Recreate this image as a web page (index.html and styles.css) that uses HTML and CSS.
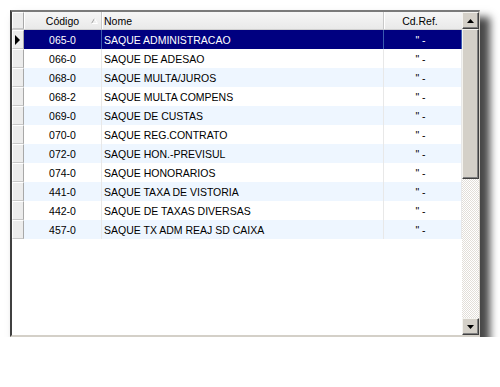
FILE: index.html
```html
<!DOCTYPE html>
<html>
<head>
<meta charset="utf-8">
<link rel="stylesheet" href="styles.css">
</head>
<body>
<div class="frame">
  <div class="grid">
    <div class="row head">
      <div class="ind"></div>
      <div class="c code">Código<svg class="sort" width="7" height="6" viewBox="0 0 7 6"><path d="M0.5 5.5 L3.5 0.5" stroke="#a0a0a0" fill="none"/><path d="M3.5 0.5 L6.5 5.5 M0.5 5.5 H6.5" stroke="#ffffff" fill="none"/></svg></div>
      <div class="c name">Nome</div>
      <div class="c ref">Cd.Ref.</div>
    </div>
    <div class="row sel">
      <div class="ind"><svg width="6" height="10" viewBox="0 0 6 10"><path d="M0 0 L5 5 L0 10 Z" fill="#000"/></svg></div>
      <div class="c code">065-0</div><div class="c name">SAQUE ADMINISTRACAO</div><div class="c ref">" -</div>
    </div>
    <div class="row">
      <div class="ind"></div>
      <div class="c code">066-0</div><div class="c name">SAQUE DE ADESAO</div><div class="c ref">" -</div>
    </div>
    <div class="row alt">
      <div class="ind"></div>
      <div class="c code">068-0</div><div class="c name">SAQUE MULTA/JUROS</div><div class="c ref">" -</div>
    </div>
    <div class="row">
      <div class="ind"></div>
      <div class="c code">068-2</div><div class="c name">SAQUE MULTA COMPENS</div><div class="c ref">" -</div>
    </div>
    <div class="row alt">
      <div class="ind"></div>
      <div class="c code">069-0</div><div class="c name">SAQUE DE CUSTAS</div><div class="c ref">" -</div>
    </div>
    <div class="row">
      <div class="ind"></div>
      <div class="c code">070-0</div><div class="c name">SAQUE REG.CONTRATO</div><div class="c ref">" -</div>
    </div>
    <div class="row alt">
      <div class="ind"></div>
      <div class="c code">072-0</div><div class="c name">SAQUE HON.-PREVISUL</div><div class="c ref">" -</div>
    </div>
    <div class="row">
      <div class="ind"></div>
      <div class="c code">074-0</div><div class="c name">SAQUE HONORARIOS</div><div class="c ref">" -</div>
    </div>
    <div class="row alt">
      <div class="ind"></div>
      <div class="c code">441-0</div><div class="c name">SAQUE TAXA DE VISTORIA</div><div class="c ref">" -</div>
    </div>
    <div class="row">
      <div class="ind"></div>
      <div class="c code">442-0</div><div class="c name">SAQUE DE TAXAS DIVERSAS</div><div class="c ref">" -</div>
    </div>
    <div class="row alt">
      <div class="ind"></div>
      <div class="c code">457-0</div><div class="c name">SAQUE TX ADM REAJ SD CAIXA</div><div class="c ref">" -</div>
    </div>
  </div>
  <div class="sbar">
    <div class="btn"><svg width="7" height="4" viewBox="0 0 7 4"><path d="M3.5 0 L7 4 L0 4 Z" fill="#000"/></svg></div>
    <div class="thumb"></div>
    <div class="track"></div>
    <div class="btn"><svg width="7" height="4" viewBox="0 0 7 4"><path d="M0 0 L7 0 L3.5 4 Z" fill="#000"/></svg></div>
  </div>
</div>
</body>
</html>
```
FILE: styles.css
```css
html, body {
  margin: 0;
  padding: 0;
  background: #ffffff;
}
body {
  padding: 10px 0 0 10px;
  font-family: "Liberation Sans", Arial, sans-serif;
  font-size: 10.5px;
  color: #000;
}
.frame {
  width: 467px;
  height: 323px;
  display: flex;
  border-top: 2px solid #7a7a7a;
  border-left: 2px solid #404040;
  border-right: 1px solid #d4d0c8;
  border-bottom: 2px solid #d4d0c8;
  background: #fff;
  box-shadow: 8px 9px 8px 2px rgba(0, 0, 0, 0.72);
}
.grid {
  width: 450px;
  display: flex;
  flex-direction: column;
}
.row {
  display: grid;
  grid-template-columns: 12px 78px 282px 78px;
  height: 19px;
  background: #ffffff;
}
.row.alt {
  background: #eef6ff;
}
.row.sel {
  background: #000080;
  color: #fff;
}
.row.head {
  height: 18px;
  background: linear-gradient(#f6f6f6, #e9e9e9);
  border-bottom: 1px solid #cfcfcf;
  box-sizing: border-box;
}
.ind {
  background: #ececec;
  border-top: 1px solid #ffffff;
  border-left: 1px solid #ffffff;
  border-right: 1px solid #a8a8a8;
  border-bottom: 1px solid #c8c8c8;
  display: flex;
  align-items: center;
  justify-content: flex-start;
  padding-left: 2px;
  box-sizing: border-box;
}
.c {
  display: flex;
  align-items: center;
  white-space: nowrap;
  overflow: hidden;
  border-right: 1px solid #e8e8e8;
  box-sizing: border-box;
}
.head .c {
  border-right: 1px solid #c8c8c8;
  box-shadow: inset 1px 0 0 #ffffff;
}
.sel .c {
  border-right-color: #3a5bb0;
}
.code {
  justify-content: center;
  position: relative;
}
.name {
  padding-left: 2px;
}
.ref {
  justify-content: center;
  padding-right: 4px;
}
.head .ref {
  padding-right: 6px;
  border-right: none;
}
.sort {
  position: absolute;
  left: 67px;
  top: 6px;
}
.sbar {
  width: 17px;
  display: flex;
  flex-direction: column;
}
.btn {
  height: 17px;
  box-sizing: border-box;
  background: #d4d0c8;
  border-top: 1px solid #f4f3ef;
  border-left: 1px solid #f4f3ef;
  border-right: 1px solid #404040;
  border-bottom: 1px solid #404040;
  box-shadow: inset -1px -1px 0 #808080;
  display: flex;
  align-items: center;
  justify-content: center;
}
.thumb {
  height: 150px;
  box-sizing: border-box;
  background: #d4d0c8;
  border-top: 1px solid #f4f3ef;
  border-left: 1px solid #f4f3ef;
  border-right: 1px solid #404040;
  border-bottom: 1px solid #404040;
  box-shadow: inset -1px -1px 0 #808080;
}
.track {
  flex: 1;
  background-color: #ffffff;
  background-image: repeating-conic-gradient(#e2ded8 0 25%, #ffffff 0 50%);
  background-size: 2px 2px;
}
```
